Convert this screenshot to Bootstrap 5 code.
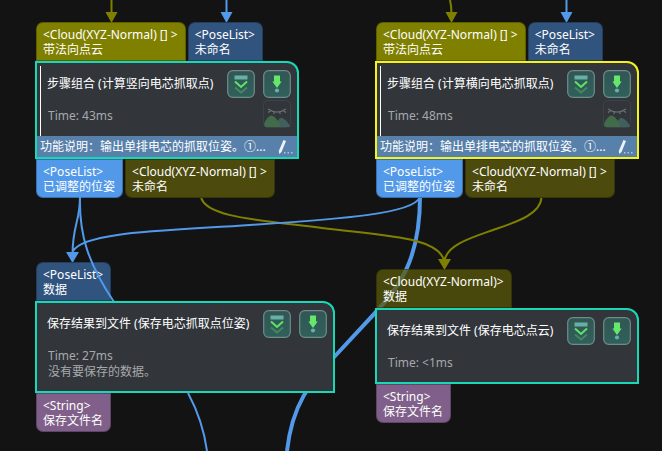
<!DOCTYPE html>
<html lang="zh-CN">
<head>
<meta charset="utf-8">
<meta name="viewport" content="width=device-width, initial-scale=1">
<title>步骤流程</title>
<link rel="stylesheet" href="https://cdn.jsdelivr.net/npm/bootstrap@5.3.0/dist/css/bootstrap.min.css">
<style>
body{background:#131313;color:#fff;font:12px/15px "Noto Sans","Noto Sans CJK SC",sans-serif}
.flow-canvas{min-height:100vh}
.wires{top:0;left:0;fill:none;stroke-width:2;pointer-events:none}
.wires-front{z-index:2}
.w-olive{stroke:#808000}
.w-blue{stroke:#5299ea}
.w-thick{stroke-width:4}
.tip-olive{fill:#808000}
.tip-blue{fill:#5299ea}
.step{width:264px}
.step-wide{width:300px}
/* positions of the steps on the free canvas */
.at-vertical{left:35px;top:22px}
.at-horizontal{left:375px;top:22px}
.at-pose{left:35px;top:262px}
.at-cloud{left:375px;top:269px}
.ports{gap:2px;margin-left:1px}
.port{height:39px;padding:4px 7px 4px 6px;border:1px solid #0004;white-space:nowrap}
.port-in{border-radius:7px 7px 0 0}
.port-out{border-radius:0 0 7px 7px}
.c-olive{background:#808000}
.c-olive-dark{background:#4c4a0d}
.c-olive-clear{background:#5c5a0ac0}
.c-blue{background:#5299ea}
.c-navy{background:#31547f}
.c-purple{background:#80608a}
.step-body{z-index:3;background:#32363b;border:2px solid #18d8b8;border-radius:0 12px 0 0}
.step-picked{border-color:#f4f41c}
.step-main{margin:3px 0 0 3px;padding:4px 6px 8px 6px;border-left:1px solid transparent}
.step-group{border-left-color:#fff}
.step-title{font-size:12px;line-height:28px;margin:0 0 10px;font-weight:400;white-space:nowrap}
.step-info{color:#a6a9ab;line-height:16px;margin:0 0 3px 1px}
.step-tools{gap:2px 8px;grid-template-columns:28px 28px;align-content:start}
.tool{width:28px;height:28px;padding:0;border:0;background:none;display:block}
.tool svg{display:block}
.tool-view{grid-column:2}
.step-note{background:#5780ab;padding:0 4px 0 3px;line-height:20px;height:21px}
.note-edit{padding:0;border:0;background:none;line-height:0}
</style>
<script src="https://cdn.jsdelivr.net/npm/bootstrap@5.3.0/dist/js/bootstrap.bundle.min.js"></script>
</head>
<body>
<svg width="0" height="0" class="position-absolute" aria-hidden="true">
<defs>
<linearGradient id="gTool" x1="0" y1="0" x2="0" y2="1"><stop offset="0" stop-color="#325653"/><stop offset="1" stop-color="#30605b"/></linearGradient>
<symbol id="iDown" viewBox="0 0 28 28"><rect x=".7" y=".7" width="26.6" height="26.6" rx="5" fill="url(#gTool)" stroke="#6b8d8b" stroke-width="1.2"/><rect x="7.5" y="5.5" width="13" height="4" fill="#68afa5"/><path d="M8 11.500l6 5.500 6-5.500" fill="none" stroke="#5fe36a" stroke-width="2"/><path d="M8 17.500l6 5 6-5" fill="none" stroke="#438763" stroke-width="2"/></symbol>
<symbol id="iRun" viewBox="0 0 28 28"><rect x=".7" y=".7" width="26.6" height="26.6" rx="5" fill="url(#gTool)" stroke="#6b8d8b" stroke-width="1.2"/><path d="M11 5.500h6v6h1.700L14 18l-4.700-6.500H11z" fill="#65e76c"/><circle cx="14" cy="20.5" r="2.1" fill="#63b1a8"/></symbol>
<symbol id="iView" viewBox="0 0 28 28"><rect x=".5" y=".5" width="27" height="27" rx="4" fill="none" stroke="#3c4249"/><path d="M5 9q9 6 18 0M8 10.500l-3 2M11.500 11.800l-.8 2.200M16.500 11.800l.8 2.200M20 10.500l3 2" fill="none" stroke="#6c7276" stroke-width="1.200"/><path d="M13 27l2-6.500q3-5 6.500-1 4.500 3 5.500 7.500z" fill="#40605f"/><path d="M1 24q3-7.500 7-8.500 4 .5 6 4.500 3.500 3 3.500 7H3q-2-.5-2-3z" fill="#416b49"/></symbol>
<symbol id="iPen" viewBox="0 0 16 16"><path d="M6.500 1l2.500 1L4.500 13 2.300 15 1.800 12z" fill="#eef3f8"/><path d="M7 13h1.500v1.500H7zm3.500 0H12v1.500h-1.500zm3.500 0h1.500v1.500H14z" fill="#b4c6d8"/></symbol>
</defs>
</svg>
<main class="flow-canvas position-relative overflow-hidden">
<svg class="wires position-absolute" width="662" height="451" aria-hidden="true">
<path class="w-olive" d="M111.500 0V15M450 0Q451.500 6 451.500 15"/>
<path class="w-blue" d="M226.500 0V15M566.500 0V15"/>
<path class="w-blue w-thick" d="M420 197C420 258 400 287 375 313L336 355C310 382 292 405 287 451"/>
<path class="w-olive" d="M201 197C205 217 258 220 322 228S440 237 444.500 262M541.500 197C541 215 513 223 493 230S445 245 444.500 262"/>
<path class="w-blue" d="M80 197C80 222 72.500 225 72.500 255M420 197C414 214 340 219 250 225S84 232 73 251"/>
<path class="w-blue" d="M188 393Q203 421 207 451"/>
<path class="tip-olive" d="M105.500 12h12l-6 11zM445.500 12h12l-6 11zM438 259h13l-6.500 11z"/>
<path class="tip-blue" d="M220.500 12h12l-6 11zM560.500 12h12l-6 11zM66 252h13l-6.500 11z"/>
</svg>
<svg class="wires wires-front position-absolute" width="662" height="451" aria-hidden="true">
<path class="w-blue" d="M80 197C79 235 88 263 114 302"/>
</svg>

<section class="step at-vertical position-absolute">
<div class="ports d-flex"><div class="port port-in c-olive">&lt;Cloud(XYZ-Normal) [] &gt;<br>带法向点云</div><div class="port port-in c-navy">&lt;PoseList&gt;<br>未命名</div></div>
<div class="step-body position-relative">
<div class="step-main step-group d-flex justify-content-between">
<div><h2 class="step-title">步骤组合 (计算竖向电芯抓取点)</h2><p class="step-info">Time: 43ms</p></div>
<div class="step-tools d-grid">
<button type="button" class="tool" aria-label="展开"><svg width="28" height="28"><use href="#iDown"/></svg></button>
<button type="button" class="tool" aria-label="运行"><svg width="28" height="28"><use href="#iRun"/></svg></button>
<button type="button" class="tool tool-view" aria-label="预览"><svg width="28" height="28"><use href="#iView"/></svg></button>
</div></div>
<div class="step-note d-flex justify-content-between align-items-center"><span class="text-nowrap">功能说明：输出单排电芯的抓取位姿。①...</span><button type="button" class="note-edit" aria-label="编辑说明"><svg width="16" height="16"><use href="#iPen"/></svg></button></div>
</div>
<div class="ports d-flex"><div class="port port-out c-blue">&lt;PoseList&gt;<br>已调整的位姿</div><div class="port port-out c-olive-dark">&lt;Cloud(XYZ-Normal) [] &gt;<br>未命名</div></div>
</section>

<section class="step at-horizontal position-absolute">
<div class="ports d-flex"><div class="port port-in c-olive">&lt;Cloud(XYZ-Normal) [] &gt;<br>带法向点云</div><div class="port port-in c-navy">&lt;PoseList&gt;<br>未命名</div></div>
<div class="step-body step-picked position-relative">
<div class="step-main step-group d-flex justify-content-between">
<div><h2 class="step-title">步骤组合 (计算横向电芯抓取点)</h2><p class="step-info">Time: 48ms</p></div>
<div class="step-tools d-grid">
<button type="button" class="tool" aria-label="展开"><svg width="28" height="28"><use href="#iDown"/></svg></button>
<button type="button" class="tool" aria-label="运行"><svg width="28" height="28"><use href="#iRun"/></svg></button>
<button type="button" class="tool tool-view" aria-label="预览"><svg width="28" height="28"><use href="#iView"/></svg></button>
</div></div>
<div class="step-note d-flex justify-content-between align-items-center"><span class="text-nowrap">功能说明：输出单排电芯的抓取位姿。①...</span><button type="button" class="note-edit" aria-label="编辑说明"><svg width="16" height="16"><use href="#iPen"/></svg></button></div>
</div>
<div class="ports d-flex"><div class="port port-out c-blue">&lt;PoseList&gt;<br>已调整的位姿</div><div class="port port-out c-olive-dark">&lt;Cloud(XYZ-Normal) [] &gt;<br>未命名</div></div>
</section>

<section class="step step-wide at-pose position-absolute">
<div class="ports d-flex"><div class="port port-in c-navy">&lt;PoseList&gt;<br>数据</div></div>
<div class="step-body position-relative">
<div class="step-main d-flex justify-content-between">
<div><h2 class="step-title">保存结果到文件 (保存电芯抓取点位姿)</h2><p class="step-info">Time: 27ms<br>没有要保存的数据。</p></div>
<div class="step-tools d-grid">
<button type="button" class="tool" aria-label="展开"><svg width="28" height="28"><use href="#iDown"/></svg></button>
<button type="button" class="tool" aria-label="运行"><svg width="28" height="28"><use href="#iRun"/></svg></button>
</div></div></div>
<div class="ports d-flex"><div class="port port-out c-purple">&lt;String&gt;<br>保存文件名</div></div>
</section>

<section class="step at-cloud position-absolute">
<div class="ports d-flex"><div class="port port-in c-olive-clear">&lt;Cloud(XYZ-Normal)&gt;<br>数据</div></div>
<div class="step-body position-relative">
<div class="step-main d-flex justify-content-between">
<div><h2 class="step-title">保存结果到文件 (保存电芯点云)</h2><p class="step-info">Time: &lt;1ms</p></div>
<div class="step-tools d-grid">
<button type="button" class="tool" aria-label="展开"><svg width="28" height="28"><use href="#iDown"/></svg></button>
<button type="button" class="tool" aria-label="运行"><svg width="28" height="28"><use href="#iRun"/></svg></button>
</div></div></div>
<div class="ports d-flex"><div class="port port-out c-purple">&lt;String&gt;<br>保存文件名</div></div>
</section>
</main>
</body>
</html>
